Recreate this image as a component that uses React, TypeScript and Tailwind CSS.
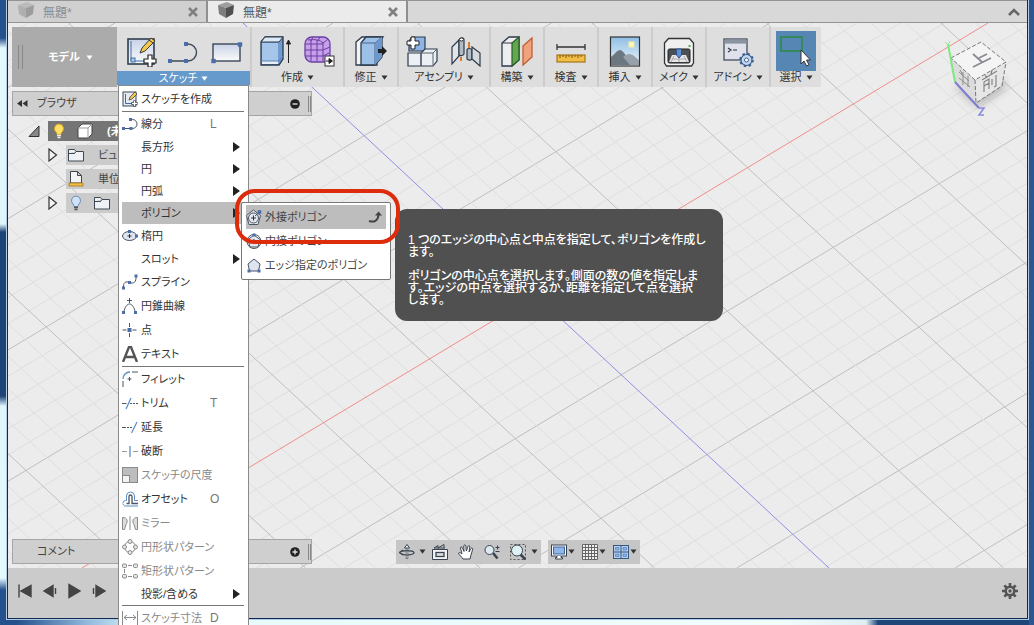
import React from "react";
import type { ReactNode } from "react";

type P = { children?: ReactNode };

function Svg({ s = 16, children }: P & { s?: 16 | 20 | 32 }) {
  const cls = s === 32 ? "h-8 w-8 shrink-0" : s === 20 ? "h-5 w-5 shrink-0" : "h-4 w-4 shrink-0";
  return (
    <svg viewBox={`0 0 ${s} ${s}`} className={cls} fill="none" aria-hidden="true">
      {children}
    </svg>
  );
}

const Caret = ({ white = false }: { white?: boolean }) => (
  <svg viewBox="0 0 7 5" className="h-[5px] w-[7px] shrink-0" aria-hidden="true">
    <path d="M0.5 0.5h6L3.5 4.8z" fill={white ? "#fff" : "#333"} />
  </svg>
);

const Dot = ({ x, y, r = 1.5 }: { x: number; y: number; r?: number }) => (
  <rect x={x - r} y={y - r} width={r * 2} height={r * 2} fill="#4a6ea8" />
);

/* ---------- Canvas grid ---------- */

function Grid() {
  const lines: ReactNode[] = [];
  for (let i = -26; i <= 26; i++) {
    const x = 82 + i * 43.65;
    if (i !== 0)
      lines.push(
        <line key={`a${i}`} x1={x} y1={568} x2={x + 906} y2={23} stroke={i % 5 === 0 ? "#bfbfbf" : "#dedede"} />
      );
  }
  for (let i = -26; i <= 24; i++) {
    const x = 829 + i * 34.9;
    if (i !== 0)
      lines.push(
        <line key={`b${i}`} x1={x} y1={568} x2={x - 586} y2={23} stroke={i % 5 === 0 ? "#bfbfbf" : "#dedede"} />
      );
  }
  return (
    <svg
      className="absolute inset-0 h-full w-full"
      viewBox="8 23 1019 545"
      preserveAspectRatio="xMinYMin slice"
      aria-hidden="true"
    >
      {lines}
      <line x1={82} y1={568} x2={988} y2={23} stroke="#f08c8c" />
      <line x1={829} y1={568} x2={243} y2={23} stroke="#8f8fe6" />
    </svg>
  );
}

function ViewCube() {
  return (
    <svg viewBox="0 0 70 84" className="absolute top-4 right-[16px] h-[84px] w-[70px]" aria-hidden="true">
      <defs>
        <filter id="soft" x="-30%" y="-30%" width="160%" height="160%">
          <feGaussianBlur stdDeviation="4" />
        </filter>
      </defs>
      <path d="M12 46L36 68L64 50V40L36 50z" fill="#8a8a8a" opacity="0.55" filter="url(#soft)" />
      <path d="M10 19L40 3L65 23L34 41z" fill="#f4f4f4" />
      <path d="M10 19L34 41L35 64L14 44z" fill="#dcdcdc" />
      <path d="M34 41L65 23L60 47L35 64z" fill="#e6e6e6" />
      <path
        d="M10 19L40 3L65 23L34 41zM34 41L35 64L61 47L65 23"
        fill="none"
        stroke="#777"
        strokeDasharray="4 2"
      />
      <path d="M7 5L14 43" stroke="#7fe87f" strokeWidth="2" />
      <path d="M4 3l3 3 2-4" stroke="#8fe88f" fill="none" />
      <path d="M14 43L38 69" stroke="#7c7cd0" strokeWidth="2" />
      <path d="M38 69h5l-5 7h5" stroke="#8c8ce0" strokeWidth="1.6" fill="none" />
      <path d="M32 28l18-9M32 15l9 8M38 19l8-4" stroke="#8a8a94" strokeWidth="1.8" fill="none" />
      <path d="M18 33l10 9M18 39l11 9M22 33v13M27 37v11M19 31l3 5" stroke="#8d8d8d" fill="none" />
      <path
        d="M41 41l15-9M44 36l2 3M51 31l-1 4M43 43v10M43 43l5-3v10M43 47l5-3M51 40v6M55 36v11l-2 1"
        stroke="#858585"
        strokeWidth="1.2"
        fill="none"
      />
    </svg>
  );
}

/* ---------- Toolbar icons ---------- */

const SketchIcon = () => (
  <Svg s={32}>
    <rect x="3" y="4" width="26" height="25" fill="url(#sheet)" stroke="#2f3d4c" strokeWidth="1.6" />
    <path d="M6 6v20h17" stroke="#3f6ea5" />
    <rect x="6" y="23" width="4" height="4" fill="#a9cdf0" stroke="#3f6ea5" />
    <path d="M15 18l2-5L26 3l4 3-10 10z" fill="#f2c84e" stroke="#3a3a3a" />
    <path d="M24 5l4 3" stroke="#3a3a3a" />
    <path d="M23 20h4v4h4v4h-4v4h-4v-4h-4v-4h4z" fill="#fff" stroke="#222" strokeWidth="1.2" />
  </Svg>
);
const LineIcon = () => (
  <Svg s={32}>
    <path d="M2 26h18a8.5 8.5 0 000-17" stroke="#3c4858" strokeWidth="1.4" />
    <Dot x={2} y={26} r={2} />
    <Dot x={18} y={26} r={2} />
    <Dot x={18} y={9} r={2} />
  </Svg>
);
const RectIcon = () => (
  <Svg s={32}>
    <rect x="2" y="9" width="27" height="17" fill="url(#sheet)" stroke="#3c4858" strokeWidth="1.4" />
    <Dot x={2.5} y={26} r={2.2} />
    <Dot x={29} y={9.5} r={2.2} />
  </Svg>
);
const ExtrudeIcon = () => (
  <Svg s={32}>
    <path d="M1 7l4-5h18v22l-4 6H1z" fill="#6f9bd0" stroke="#2c3a4c" strokeWidth="1.3" />
    <path d="M1 7h18l4-5H5z" fill="#dce9f7" stroke="#2c3a4c" />
    <path d="M2 8h16v18H2z" fill="#a5c6ea" />
    <path d="M2 26h16v3H2z" fill="#e9eef4" />
    <path d="M1 26h18l4-5" stroke="#5d83b5" />
    <path d="M28.500 28V7M26.500 9l2-4 2 4z" stroke="#222" fill="#222" />
  </Svg>
);
const FormIcon = () => (
  <Svg s={32}>
    <rect x="1" y="2" width="25" height="25" rx="7" fill="#c7a0ec" stroke="#6b3fa0" strokeWidth="1.3" />
    <path d="M1 9h18M1 15h18M1 21h18M7 5v21M13 5v21M19 7v19M4 5c8-1 12 0 15 3 3-2 4-3 5-4M19 15l7-3M19 21l6-3M9 2l-2 4M16 2l-2 4" stroke="#6b3fa0" />
    <rect x="21" y="21" width="9" height="10" fill="#fff" stroke="#333" />
    <path d="M22 26h4M25 23.500l3.500 2.500-3.500 2.500z" stroke="#222" fill="#222" />
  </Svg>
);
const PressPullIcon = () => (
  <Svg s={32}>
    <path d="M1 7l6-5h21l-6 7v21H1z" fill="#f3f3f3" stroke="#2c3a4c" strokeWidth="1.3" />
    <path d="M6 8l5-6h16v20l-7 8H6z" fill="#9dc0e6" stroke="#2c3a4c" strokeWidth="1.3" />
    <path d="M6 8h14v22M20 8l7-6" stroke="#46678f" />
    <path d="M20 8l7-6v20l-7 8z" fill="#6c98cd" />
    <path d="M23 14h4v-3l5 5-5 5v-3h-4z" fill="#222" />
  </Svg>
);
const ComponentIcon = () => (
  <Svg s={32}>
    <path d="M3 6l3-4h13v14H3z" fill="#8db4e2" stroke="#2c3a4c" strokeWidth="1.2" />
    <path d="M2 18h13v13H2zM15 18l4-4h12v12l-4 5H15z" fill="#eceff3" stroke="#2c3a4c" strokeWidth="1.2" />
    <path d="M15 18h12v13M27 18l4-4M15 18v13" stroke="#5a6470" />
    <path d="M5 2h4v4h4v4H9v4H5v-4H1V6h4z" fill="#fff" stroke="#222" />
  </Svg>
);
const JointIcon = () => (
  <Svg s={32}>
    <path d="M2 12l7-7v16l-7 8z" fill="#e3e6e9" stroke="#2c3a4c" strokeWidth="1.2" />
    <path d="M9 5c1-3 5-3 5 0v14c-1 2-4 2-5 1z" fill="#b4bbc2" stroke="#2c3a4c" strokeWidth="1.2" />
    <path d="M17 15c0-2 4-2 5 0v9c-1 2-4 1-5 0z" fill="#b4bbc2" stroke="#2c3a4c" strokeWidth="1.2" />
    <path d="M22 12l8 6v13l-8-7z" fill="#d6dade" stroke="#2c3a4c" strokeWidth="1.2" />
    <path d="M11 22v4M19 7v6" stroke="#dd7c30" strokeWidth="2" />
    <ellipse cx="11.500" cy="4.500" rx="2" ry="1.500" fill="#fff" stroke="#333" />
  </Svg>
);
const PlaneIcon = () => (
  <Svg s={32}>
    <path d="M1 8l7-6h10v23l-7 6H1z" fill="#eee" stroke="#2c3a4c" strokeWidth="1.3" />
    <path d="M11 8l7-6v23l-7 6z" fill="#5fa84e" stroke="#2b5a26" strokeWidth="1.2" />
    <path d="M1 8h10" stroke="#2c3a4c" />
    <path d="M22 11l9-8v19l-9 8z" fill="#f0a27c" stroke="#c05f30" strokeWidth="1.3" />
  </Svg>
);
const MeasureIcon = () => (
  <Svg s={32}>
    <path d="M2 12h28M2 9v6M30 9v6" stroke="#333" strokeWidth="1.3" />
    <rect x="2" y="20" width="28" height="7" fill="#f0bd45" stroke="#a8731c" strokeWidth="1.2" />
    <path d="M5 20v3M8 20v2M11 20v3M14 20v2M17 20v3M20 20v2M23 20v3M26 20v2" stroke="#7e5513" />
  </Svg>
);
const ImageIcon = () => (
  <Svg s={32}>
    <rect x="1.500" y="2" width="29" height="29" fill="url(#sky)" stroke="#333" strokeWidth="1.2" />
    <path d="M2 22c4-3 6-7 9-7 4 0 8 10 12 15H2z" fill="#6d7782" />
    <path d="M14 22c3-2 4-3 6-3 4 0 7 4 10 6v5H21z" fill="#98a1a9" />
    <rect x="20" y="7" width="5" height="5" fill="#fff7b8" stroke="#f5eba0" />
  </Svg>
);
const MakeIcon = () => (
  <Svg s={32}>
    <path d="M1.500 8l4-4.500h21l4 4.500v20l-2 3h-25l-2-3z" fill="#f0f0f0" stroke="#333" strokeWidth="1.3" />
    <rect x="5" y="14" width="22" height="14" rx="1.500" fill="#4b5057" stroke="#222" />
    <path d="M9 20h14l3 7H6z" fill="#e6e6e6" />
    <path d="M13.500 14h5v6l-2.500 3-2.500-3z" fill="#5b90d4" stroke="#2c558c" />
    <path d="M9 24h14M11 21l-3 6M16 23v4M21 21l3 6" stroke="#aaa" />
    <rect x="25.500" y="10" width="2" height="2" fill="#4caf50" />
  </Svg>
);
const AddinIcon = () => (
  <Svg s={32}>
    <rect x="2" y="4" width="23" height="21" fill="#dfe2ec" stroke="#3a4450" strokeWidth="1.2" />
    <rect x="2.600" y="4.600" width="22" height="4" fill="#8a93a0" />
    <path d="M6 13l3 2-3 2M11 15h4" stroke="#333" strokeWidth="1.200" />
    <circle cx="24.500" cy="25" r="5.500" fill="#c3d8f0" stroke="#3d5f8e" strokeWidth="1.2" />
    <circle cx="24.500" cy="25" r="6.300" stroke="#3d5f8e" strokeWidth="2" strokeDasharray="2.500 2.450" />
    <circle cx="24.500" cy="25" r="2" fill="#fff" stroke="#3d5f8e" />
  </Svg>
);
const SelectIcon = () => (
  <Svg s={32}>
    <rect x="1" y="2" width="21" height="14" stroke="#2f8a46" strokeWidth="1.6" />
    <path d="M21 15v14l3-3 2.500 5 2.500-1.200L26.500 25h4z" fill="#fff" stroke="#333" />
  </Svg>
);

function Group({ label, icons, className, tile }: { label: string; icons: ReactNode; className: string; tile?: boolean }) {
  return (
    <button type="button" className={`flex flex-col items-center border-l-2 border-[#cccccc] pt-1 ${className}`}>
      <span className={`flex h-10 items-center justify-center gap-3 ${tile ? "w-10 bg-[#5686b4]" : ""}`}>{icons}</span>
      <span className="flex h-3 items-center gap-1 text-[11px] leading-3 whitespace-nowrap text-[#333]">
        {label}
        <Caret />
      </span>
    </button>
  );
}

/* ---------- Sketch menu ---------- */

const g = "#8a8a8a";
const d = "#4a5563";

const mi = {
  create: (
    <Svg>
      <rect x="1" y="1" width="13" height="14" fill="#e4e9f2" stroke="#3b4856" />
      <path d="M3.500 3v9.500H10" stroke="#3f6ea5" />
      <path d="M7 9l1-3 5-5 2 2-5 5z" fill="#f0c654" stroke="#444" strokeWidth=".8" />
      <path d="M12.500 9.500v6M9.500 12.500h6" stroke="#333" strokeWidth="2.800" />
      <path d="M12.500 10v5M10 12.500h5" stroke="#fff" strokeWidth="1.400" />
    </Svg>
  ),
  line: (
    <Svg>
      <path d="M1.500 12.500h9a4.500 4.500 0 000-9h-2" stroke={d} />
      <Dot x={1.5} y={12.5} />
      <Dot x={9} y={12.5} />
      <Dot x={8.500} y={3.5} />
    </Svg>
  ),
  ellipse: (
    <Svg>
      <ellipse cx="7.500" cy="8" rx="7" ry="4.500" fill="#dfe6f0" stroke={d} />
      <path d="M7.500 6v4M5.500 8h4" stroke="#333" />
      <Dot x={7.5} y={3.5} />
      <Dot x={14.5} y={8} />
    </Svg>
  ),
  spline: (
    <Svg>
      <path d="M1.500 14C1 8 4 7 7.500 8.500c4 1.500 7 0 6.500-6.500" stroke={d} />
      <Dot x={1.5} y={14} />
      <Dot x={7.5} y={8.5} />
      <Dot x={14} y={2} />
    </Svg>
  ),
  conic: (
    <Svg>
      <path d="M1.500 14.500C3 9 5 6 7.500 6s4.500 3 6 8.500M7.500 0v5M5 2.500h5" stroke={d} />
      <Dot x={1.5} y={14.5} />
      <Dot x={13.5} y={14.5} />
    </Svg>
  ),
  point: (
    <Svg>
      <path d="M7.500 1v4M7.500 11v4M.5 8h4M10.500 8h4" stroke={d} />
      <Dot x={7.500} y={8} r={2} />
    </Svg>
  ),
  text: (
    <Svg>
      <path d="M1 16L7 1h2l6 15M3.500 11h9" stroke="#555" strokeWidth="2.400" />
    </Svg>
  ),
  fillet: (
    <Svg>
      <path d="M1 8C1 4 4 1 8 1" stroke="#5b8fc8" strokeWidth="1.300" />
      <path d="M10 1h6M1 10v6M7.500 6v4M5.500 8h4" stroke={d} />
    </Svg>
  ),
  trim: (
    <Svg>
      <path d="M0 8.500h4.500M8 8.500h2M11 8.500h2M14 8.500h2" stroke={d} />
      <path d="M4 14L9 3" stroke="#5b8fc8" strokeWidth="1.300" />
    </Svg>
  ),
  extend: (
    <Svg>
      <path d="M0 8.500h4M5 8.500h2M8 8.500h2" stroke={d} />
      <path d="M9.500 14L15 3" stroke="#5b8fc8" strokeWidth="1.300" />
    </Svg>
  ),
  brk: (
    <Svg>
      <path d="M0 8.500h5M11 8.500h5" stroke="#999" />
      <path d="M8 3v11" stroke="#5b8fc8" strokeWidth="1.300" />
    </Svg>
  ),
  scale: (
    <Svg>
      <rect x=".5" y=".5" width="15" height="15" fill="#bdbdbd" stroke={g} />
      <rect x=".5" y="8.500" width="7" height="7" fill="#f3f3f3" stroke={g} />
    </Svg>
  ),
  offset: (
    <Svg>
      <path d="M16 9.500h-3.500V5a4 4 0 00-8 0v4.500H3.500a3 3 0 00-2.700 3" stroke="#5b8fc8" />
      <path d="M16 12.500h-6V5.500a1.500 1.500 0 00-3 0v7H4.500" stroke={d} strokeWidth="1.300" />
      <path d="M1 13c.5 1.500 1.500 2 3 2h12" stroke="#5b8fc8" />
    </Svg>
  ),
  mirror: (
    <Svg>
      <path d="M.5 2.500c5 0 5.500 4 3.500 7l-1.500 5h-2zM15.500 2.500c-5 0-5.500 4-3.500 7l1.500 5h2z" fill="#ddd" stroke={g} />
      <path d="M8 1v14" stroke={g} />
    </Svg>
  ),
  circular: (
    <Svg>
      <circle cx="8" cy="8" r="5.500" stroke={g} />
      <g fill="#e6e6e6" stroke={g}>
        <circle cx="8" cy="2.500" r="2" />
        <circle cx="2.500" cy="8" r="2" />
        <circle cx="13.500" cy="8" r="2" />
        <circle cx="8" cy="13.500" r="2" />
      </g>
    </Svg>
  ),
  rectangular: (
    <Svg>
      <path d="M6 2.500h4M2.500 6v4M6 13.500h4" stroke={g} />
      <g fill="#e6e6e6" stroke={g}>
        <rect x=".5" y="1" width="4" height="3.500" rx="1" />
        <rect x="11.500" y="1" width="4" height="3.500" rx="1" />
        <rect x=".5" y="11.500" width="4" height="3.500" rx="1" />
        <rect x="11.500" y="11.500" width="4" height="3.500" rx="1" />
      </g>
    </Svg>
  ),
  dimension: (
    <Svg>
      <path d="M.5 1v15M15.500 1v15M2 7.500h12M5 5L2 7.500 5 10M11 5l3 2.500-3 2.500" stroke={g} />
    </Svg>
  ),
  circum: (
    <Svg>
      <path d="M7.500 1l7 5.500-2.500 9h-9L.5 6.500z" fill="#e3e8f0" stroke={d} />
      <circle cx="7.500" cy="9" r="5" stroke={d} />
      <path d="M7.500 6.500v5M5 9h5" stroke="#333" />
      <path d="M9 7l4-3.500" stroke={d} />
      <Dot x={13.5} y={3} r={1.8} />
    </Svg>
  ),
  inscribed: (
    <Svg>
      <circle cx="8" cy="8.500" r="7" stroke={d} />
      <path d="M8 2l6 4.500-2 7.500H4L2 6.500z" fill="#e3e8f0" stroke={d} />
      <path d="M8 6v5M5.500 8.500h5" stroke="#333" />
      <Dot x={8} y={2} />
    </Svg>
  ),
  edge: (
    <Svg>
      <path d="M8 2l6 5-1.500 7h-9L2 7z" fill="#dfe5f0" stroke={d} />
      <Dot x={3} y={14} />
      <Dot x={13} y={14} />
    </Svg>
  ),
};

type Item = { label: string; icon?: ReactNode; keyName?: string; sub?: boolean; off?: boolean; open?: boolean } | "sep";

const menu: Item[] = [
  { label: "スケッチを作成", icon: mi.create },
  "sep",
  { label: "線分", icon: mi.line, keyName: "L" },
  { label: "長方形", sub: true },
  { label: "円", sub: true },
  { label: "円弧", sub: true },
  { label: "ポリゴン", sub: true, open: true },
  { label: "楕円", icon: mi.ellipse },
  { label: "スロット", sub: true },
  { label: "スプライン", icon: mi.spline },
  { label: "円錐曲線", icon: mi.conic },
  { label: "点", icon: mi.point },
  { label: "テキスト", icon: mi.text },
  "sep",
  { label: "フィレット", icon: mi.fillet },
  { label: "トリム", icon: mi.trim, keyName: "T" },
  { label: "延長", icon: mi.extend },
  { label: "破断", icon: mi.brk },
  { label: "スケッチの尺度", icon: mi.scale, off: true },
  { label: "オフセット", icon: mi.offset, keyName: "O" },
  { label: "ミラー", icon: mi.mirror, off: true },
  { label: "円形状パターン", icon: mi.circular, off: true },
  { label: "矩形状パターン", icon: mi.rectangular, off: true },
  { label: "投影/含める", sub: true },
  "sep",
  { label: "スケッチ寸法", icon: mi.dimension, keyName: "D", off: true },
];

function SubMenu() {
  const rows = [
    { label: "外接ポリゴン", icon: mi.circum },
    { label: "内接ポリゴン", icon: mi.inscribed },
    { label: "エッジ指定のポリゴン", icon: mi.edge },
  ];
  return (
    <div className="absolute top-0 left-[119px] z-10">
      <ul className="w-[150px] rounded-xs border border-[#777] bg-white py-[2px] pr-1 pl-1">
        {rows.map((r, i) => (
          <li key={r.label}>
            <button
              type="button"
              className={`flex h-6 w-full items-center gap-[3px] whitespace-nowrap text-[#444] ${i === 0 ? "bg-[#bdbdbd]" : ""}`}
            >
              {r.icon}
              <span className="flex-1 text-left">{r.label}</span>
              {i === 0 && (
                <svg viewBox="0 0 14 12" className="mr-1 h-3 w-[14px]" fill="none" aria-hidden="true">
                  <path d="M1 10c5 1.500 9 0 9.500-6" stroke="#444" strokeWidth="2" />
                  <path d="M7 4.500L10.500 .5 14 4.500z" fill="#444" />
                </svg>
              )}
            </button>
          </li>
        ))}
      </ul>
      <div
        role="tooltip"
        className="absolute top-[7px] left-[154px] flex h-[112px] w-[328px] flex-col justify-center gap-3 rounded-xl bg-[#505050] px-[13px] pt-2.5 text-[12px] leading-3 font-medium whitespace-pre text-white"
      >
        <p>{"1 つのエッジの中心点と中点を指定して、ポリゴンを作成し\nます。"}</p>
        <p>{"ポリゴンの中心点を選択します。側面の数の値を指定しま\nす。エッジの中点を選択するか、距離を指定して点を選択\nします。"}</p>
      </div>
      <div className="pointer-events-none absolute -top-[13px] -left-[6px] h-[55px] w-[165px] rounded-[20px] border-4 border-[#dd2c0c]" />
    </div>
  );
}

function SketchMenu() {
  return (
    <ul className="absolute top-full left-[1px] z-20 w-[131px] border border-[#8a8a8a] bg-white pt-px pl-[3px] text-[11px]">
      {menu.map((m, i) =>
        m === "sep" ? (
          <li key={i} role="separator" className="mr-1 h-px bg-[#777]" />
        ) : (
          <li key={i} className="relative">
            <button
              type="button"
              disabled={m.off}
              className={`flex w-full items-center gap-[3px] leading-4 whitespace-nowrap ${m.icon ? "h-6" : "h-[22px]"} ${m.off ? "text-[#888]" : "text-[#333]"} ${m.open ? "bg-[#bdbdbd]" : ""}`}
            >
              <span className="w-4 shrink-0">{m.icon}</span>
              <span className="w-[66px] shrink-0 text-left">{m.label}</span>
              <span className="w-5 shrink-0 text-left font-['Liberation_Sans'] text-[12px] text-[#777]">{m.keyName}</span>
              {m.sub && (
                <svg viewBox="0 0 7 10" className="h-[10px] w-[7px] shrink-0" aria-hidden="true">
                  <path d="M0 0l7 5-7 5z" fill="#222" />
                </svg>
              )}
            </button>
            {m.open && <SubMenu />}
          </li>
        )
      )}
    </ul>
  );
}

/* ---------- Panels ---------- */

function Panel({ title, back, plus }: { title: string; back?: boolean; plus?: boolean }) {
  return (
    <div className="flex h-[25px] w-[300px] items-center border border-[#a5a5a5] bg-[#cfcfcf] text-[11px] text-[#444]">
      <span className="w-6 shrink-0 pl-1">
        {back && (
          <svg viewBox="0 0 11 7" className="h-[7px] w-[11px]" aria-hidden="true">
            <path d="M5 0v7L0 3.500zM10.500 0v7l-5-3.500z" fill="#333" />
          </svg>
        )}
      </span>
      <span className="flex-1">{title}</span>
      <button type="button" aria-label={plus ? "追加" : "閉じる"} className="mr-2">
        <svg viewBox="0 0 10 10" className="h-[10px] w-[10px]" aria-hidden="true">
          <circle cx="5" cy="5" r="4.800" fill="#222" />
          <path d={plus ? "M2.500 5h5M5 2.500v5" : "M2.500 5h5"} stroke="#ddd" strokeWidth="1.400" />
        </svg>
      </button>
      <span className="h-4 w-[3px] border-x border-[#888]" />
    </div>
  );
}

const Folder = () => (
  <Svg>
    <path d="M.5 14V2.500h6l1.500 2h7.500V14zM.5 6.500h6l1.500-2" fill="#eef1f5" stroke="#3d4854" />
  </Svg>
);
const Bulb = ({ on }: { on?: boolean }) => (
  <Svg>
    <path d="M8 1a4.600 4.600 0 00-3 8c.8.800 1 1.500 1 2.500h4c0-1 .2-1.700 1-2.500a4.600 4.600 0 00-3-8z" fill={on ? "#ffe066" : "#cfe2f7"} stroke={on ? "#d9a520" : "#6c8db5"} />
    <path d="M6 12.500h4M6.500 14.500h3" stroke={on ? "#eee" : "#555"} strokeWidth="1.400" />
  </Svg>
);
const Expand = () => (
  <svg viewBox="0 0 10 14" className="h-[14px] w-[10px] shrink-0" fill="none" aria-hidden="true">
    <path d="M1 1l7.500 6L1 13z" fill="#f3f3f3" stroke="#333" strokeWidth="1.200" />
  </svg>
);

function Tree() {
  return (
    <ul className="mt-[5px] flex w-28 flex-col gap-1 overflow-hidden text-[11px] whitespace-nowrap text-[#444]">
      <li className="flex items-center gap-2 pl-4">
        <svg viewBox="0 0 12 12" className="h-3 w-3 shrink-0" aria-hidden="true">
          <path d="M1 11.500L11 1v10.500z" fill="#888" stroke="#333" />
        </svg>
        <div className="flex h-5 flex-1 items-center gap-[10px] bg-[#757575] pl-[3px] font-bold text-white">
          <Bulb on />
          <Svg>
            <path d="M1 5l4-4h10v10l-4 4H1z" fill="#fff" stroke="#444" />
            <path d="M1 5h10v10M11 5l4-4" stroke="#999" />
          </Svg>
          <span className="pl-1">(未</span>
        </div>
      </li>
      <li className="flex items-center gap-2 pl-9">
        <Expand />
        <div className="flex h-5 flex-1 items-center gap-[14px] bg-[#cbcbcb] pl-[2px]">
          <Folder />
          <span>ビュ</span>
        </div>
      </li>
      <li className="flex items-center pl-[54px]">
        <div className="flex h-5 flex-1 items-center gap-[14px] bg-[#cbcbcb] pl-[2px]">
          <Svg>
            <path d="M2.500 12V.5h7l4 4V12zM9.500.5v4h4" fill="#f4f4f4" stroke="#3d4854" />
            <path d="M1 12h14v3H1z" fill="#f0bd45" stroke="#a8731c" strokeWidth=".8" />
          </Svg>
          <span>単位</span>
        </div>
      </li>
      <li className="flex items-center gap-2 pl-9">
        <Expand />
        <div className="flex h-5 flex-1 items-center gap-[10px] bg-[#cbcbcb] pl-[2px]">
          <Bulb />
          <Folder />
        </div>
      </li>
    </ul>
  );
}

function NavBars() {
  const s = "#3a4450";
  return (
    <div className="flex gap-[7px]">
      <div className="flex h-6 items-center bg-[#c6c6c6] px-[3px]">
        <button type="button" aria-label="オービット" className="flex items-center gap-1">
          <Svg>
            <path d="M8 3v12" stroke={s} strokeWidth="2.400" />
            <path d="M8 3v11.500" stroke="#fff" />
            <path d="M5.500 4L8 .5 10.500 4z" fill="#fff" stroke={s} />
            <path d="M1 8.500C2 6 14 6 15 8.500S5 12 2 9.500M4 6L.5 8.500 4 11" stroke={s} strokeWidth="1.200" />
          </Svg>
          <Caret />
        </button>
        <button type="button" aria-label="ビュー正面" className="ml-1.5">
          <Svg>
            <path d="M.5 5.500h15v10H.5z" fill="#f2f2f2" stroke={s} />
            <path d="M2 4l4-2.500V4M6 4l6-3.500V4M2 4h11" stroke={s} />
            <rect x="4" y="8.500" width="8" height="4" fill="#ddd" stroke={s} strokeWidth="1.300" />
          </Svg>
        </button>
        <button type="button" aria-label="画面移動" className="ml-2.5">
          <Svg>
            <path d="M5 15c-1-2-4-4-4.500-6 1-1 2.500 0 3.500 1L2.500 4c0-1.500 1.500-1.500 2 0L6 7.500 5.800 2c.2-1.500 1.800-1.500 2 0l.5 5L10 2.500c.5-1.400 2-1 1.800.5L11 8l2-3.500c.8-1.200 2-.5 1.700.6L13 11l-1 4z" fill="#fff" stroke={s} />
          </Svg>
        </button>
        <button type="button" aria-label="ズーム" className="ml-2.5">
          <Svg>
            <path d="M9 9l4.500 5.500" stroke={s} strokeWidth="2.600" />
            <circle cx="5.500" cy="6" r="4.500" fill="#dceaf2" stroke={s} />
            <path d="M11.500 3.500h4M13.500 1.500v4M11.500 7.500h4" stroke={s} />
          </Svg>
        </button>
        <button type="button" aria-label="フィット" className="ml-2.5 flex items-center gap-[5px]">
          <Svg>
            <rect x=".5" y=".5" width="15" height="15" stroke="#555" strokeDasharray="2 2" />
            <path d="M10.500 10.500l5 5" stroke={s} strokeWidth="2.600" />
            <circle cx="7" cy="6.500" r="5.500" fill="#dff0f2" stroke={s} />
          </Svg>
          <Caret />
        </button>
      </div>
      <div className="flex h-6 items-center gap-[7px] bg-[#c6c6c6] px-[3px]">
        <button type="button" aria-label="表示設定" className="flex items-center gap-px">
          <Svg>
            <rect x=".5" y="1" width="15" height="11" fill="#fff" stroke={s} />
            <rect x="2.500" y="3" width="11" height="7" fill="#8fb6e6" stroke="#41679c" />
            <path d="M6 12v1.500H4.500V15h7v-1.500H10V12" stroke={s} fill="#fff" />
          </Svg>
          <Caret />
        </button>
        <button type="button" aria-label="グリッド" className="flex items-center gap-px">
          <Svg>
            <path d="M.5.5h15v15H.5zM.5 3.500h15M.5 6.500h15M.5 9.500h15M.5 12.500h15M3.500.5v15M6.500.5v15M9.500.5v15M12.500.5v15" fill="#f2f2f2" stroke="#666" />
          </Svg>
          <Caret />
        </button>
        <button type="button" aria-label="ビューポート" className="flex items-center gap-px">
          <Svg>
            <rect x=".5" y="1.500" width="15" height="13" fill="#b9d2f0" stroke="#34577f" />
            <path d="M8 1.500v13M.5 8h15" stroke="#34577f" />
            <path d="M2.500 3.500h3.500v2.500H2.500zM10 3.500h3.500v2.500H10zM2.500 10h3.500v2.500H2.500zM10 10h3.500v2.500H10z" fill="#8fb6e6" stroke="#5a84b8" strokeWidth=".8" />
          </Svg>
          <Caret />
        </button>
      </div>
    </div>
  );
}

function Tab({ active }: { active?: boolean }) {
  return (
    <div
      className={`flex h-full w-[200px] items-center border-r-2 border-[#8f8f8f] pl-[10px] text-[12px] ${active ? "bg-[#ebebeb] text-[#555]" : "bg-[#d0d0d0] text-[#8c8c8c]"}`}
    >
      <button type="button" className="flex flex-1 items-center gap-[9px] text-left leading-4">
        <span className={active ? "pb-1" : "pb-1 opacity-40"}>
          <Svg>
            <path d="M0 3l9-3 7 3-8 3z" fill="#9d9d9d" />
            <path d="M0 3l8 3v10l-7-4z" fill="#7e7e7e" />
            <path d="M8 6l8-3-1 9-7 4z" fill="#505050" />
          </Svg>
        </span>
        <span className="pt-0.5">無題*</span>
      </button>
      <button type="button" aria-label="閉じる" className="mr-2">
        <svg viewBox="0 0 10 10" className="h-[10px] w-[10px]" aria-hidden="true">
          <path d="M1 1l8 8M9 1L1 9" stroke="#808080" strokeWidth="2.600" />
        </svg>
      </button>
    </div>
  );
}

function Timeline() {
  return (
    <footer className="flex h-[50px] items-center bg-[#cbcbcb] px-[9px] pb-1">
      <div className="flex gap-[9px]">
        {[
          ["先頭", "M2 1.500v13M14 2.500v11L4 8z"],
          ["戻る", "M11 2.500v11L2 8zM13.500 5v6"],
          ["再生", "M2 1.500v13l11-6.500z"],
          ["進む", "M4 2.500v11l9-5.500zM1.500 5v6"],
        ].map(([n, p]) => (
          <button key={n} type="button" aria-label={n}>
            <Svg>
              <path d={p} fill="#444" stroke="#444" strokeWidth="1.400" />
            </Svg>
          </button>
        ))}
      </div>
      <button type="button" aria-label="設定" className="ml-auto">
        <Svg>
          <circle cx="8" cy="8" r="4.300" stroke="#555" strokeWidth="2.600" />
          <path
            d="M8 0v3M8 13v3M0 8h3M13 8h3M2.300 2.300l2.200 2.200M11.500 11.500l2.200 2.200M2.300 13.700l2.200-2.200M11.500 4.500l2.200-2.200"
            stroke="#555"
            strokeWidth="2.600"
          />
          <circle cx="8" cy="8" r="1.700" fill="#555" />
        </Svg>
      </button>
    </footer>
  );
}

export default function App() {
  return (
    <div className="flex min-h-screen overflow-hidden font-['Liberation_Sans','Noto_Sans_CJK_JP',sans-serif] [font-feature-settings:'palt']">
      <svg className="absolute h-0 w-0" aria-hidden="true">
        <defs>
          <linearGradient id="sheet" x1="0" y1="0" x2="0" y2="1">
            <stop offset="0" stopColor="#c9d3e8" />
            <stop offset="1" stopColor="#fafafa" />
          </linearGradient>
          <linearGradient id="sky" x1="0" y1="0" x2="0" y2="1">
            <stop offset="0" stopColor="#8fbfe6" />
            <stop offset="1" stopColor="#eef6fb" />
          </linearGradient>
        </defs>
      </svg>
      <div className="w-[6px] shrink-0 bg-[linear-gradient(#24508c_38px,#e6f8ff_48px,#dff4fb_224px,#1c4478_232px,#1c4478_396px,#dff4fb_406px,#e6f8ff_578px,#24508c_590px)]" />
      <div className="flex min-w-0 flex-1 flex-col">
        <div className="flex flex-1 flex-col border-x border-b border-[#b4cbe4]">
          <div className="flex flex-1 flex-col border-x border-b border-[#0f2a52]">
            <header className="flex h-[23px] border-y border-[#949494] bg-[#d8d8d8]">
              <Tab />
              <Tab active />
              <button type="button" aria-label="折りたたむ" className="mr-[7px] ml-auto">
                <svg viewBox="0 0 12 8" className="h-2 w-3" fill="none" aria-hidden="true">
                  <path d="M1 7l5-5 5 5" stroke="#666" strokeWidth="2.600" />
                </svg>
              </button>
            </header>
            <main className="relative flex flex-1 flex-col bg-[#ececec] p-1">
              <Grid />
              <ViewCube />
              <div className="relative z-10 flex h-[60px] self-start bg-[#dedede]">
                <button
                  type="button"
                  className="relative flex w-[105px] items-center justify-center gap-1.5 bg-[#ababab] pl-3 text-[11px] font-bold text-white"
                >
                  <span className="absolute left-[6px] h-6 w-[5px] border-x border-[#888]" />
                  モデル
                  <Caret white />
                </button>
                <div className="relative flex w-[133px] flex-col pt-1">
                  <div className="flex h-10 items-center gap-[11px] pl-2">
                    <button type="button" aria-label="スケッチを作成"><SketchIcon /></button>
                    <button type="button" aria-label="線分"><LineIcon /></button>
                    <button type="button" aria-label="長方形"><RectIcon /></button>
                  </div>
                  <button
                    type="button"
                    className="flex h-[14px] items-center justify-center gap-1 bg-[#6699cc] text-[11px] leading-3 text-white"
                  >
                    スケッチ
                    <Caret white />
                  </button>
                  <div className="absolute top-[58px] left-0">
                    <SketchMenu />
                  </div>
                </div>
                <Group label="作成" className="w-[93px]" icons={<><ExtrudeIcon /><FormIcon /></>} />
                <Group label="修正" className="w-[54px]" icons={<PressPullIcon />} />
                <Group label="アセンブリ" className="w-[92px]" icons={<><ComponentIcon /><JointIcon /></>} />
                <Group label="構築" className="w-[54px]" icons={<PlaneIcon />} />
                <Group label="検査" className="w-[54px]" icons={<MeasureIcon />} />
                <Group label="挿入" className="w-[54px]" icons={<ImageIcon />} />
                <Group label="メイク" className="w-[54px]" icons={<MakeIcon />} />
                <Group label="アドイン" className="w-[64px]" icons={<AddinIcon />} />
                <Group label="選択" className="w-[52px]" icons={<SelectIcon />} tile />
              </div>
              <div className="relative mt-1">
                <Panel title="ブラウザ" back />
                <Tree />
              </div>
              <div className="relative mt-auto grid grid-cols-[1fr_auto_1fr] items-center">
                <Panel title="コメント" plus />
                <NavBars />
              </div>
            </main>
            <Timeline />
          </div>
        </div>
        <div className="h-[5px] bg-[linear-gradient(90deg,#24508c_10px,#8fb8dc_80px,#e6fbff_140px,#f0fdff_780px,#dfeef2_860px,#1f4679_872px)]" />
      </div>
      <div className="w-[5px] shrink-0 bg-[#2c568f]" />
    </div>
  );
}
